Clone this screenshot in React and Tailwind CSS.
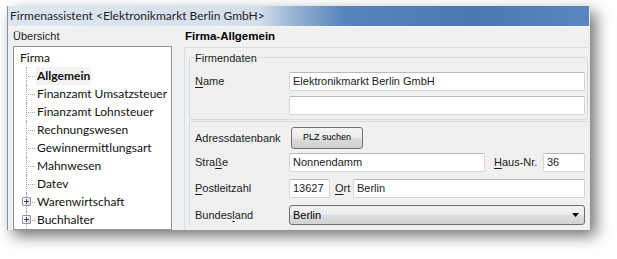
import React from 'react'

const label = "font-['Liberation_Sans',Arial,sans-serif] text-[11px] text-[#1b1b1b] whitespace-nowrap"
const field =
  "flex items-center h-[19px] pl-[3px] bg-white border border-[#d3d5da] border-t-[#b7bac1] rounded-[2px] font-['Liberation_Sans',Arial,sans-serif] text-[11px] text-[#1b1b1b] whitespace-nowrap"

const treeItems = [
  { text: 'Allgemein', bold: true },
  { text: 'Finanzamt Umsatzsteuer' },
  { text: 'Finanzamt Lohnsteuer' },
  { text: 'Rechnungswesen' },
  { text: 'Gewinnermittlungsart' },
  { text: 'Mahnwesen' },
  { text: 'Datev' },
  { text: 'Warenwirtschaft', plus: true },
  { text: 'Buchhalter', plus: true },
]

const PlusBox = () => (
  <div className="absolute left-[-4px] top-[4px] w-[9px] h-[9px] border border-[#969696] rounded-[1px] bg-gradient-to-br from-white to-[#dcdcdc] flex items-center justify-center">
    <svg width="5" height="5" viewBox="0 0 5 5">
      <path d="M0 2.5H5M2.5 0V5" stroke="#2b4a7a" strokeWidth="1" />
    </svg>
  </div>
)

const TreeRow = ({ item }) => (
  <div className="flex h-[18px] ml-[12px]">
    <div className="relative w-[9px] h-full shrink-0">
      <div className="absolute left-0 top-0 bottom-0 border-l border-dotted border-[#a3a3a3]" />
      <div className="absolute left-0 right-0 top-[9px] border-t border-dotted border-[#a3a3a3]" />
      {item.plus && <PlusBox />}
    </div>
    <div
      className={`ml-[1px] px-[1px] flex items-center h-full whitespace-nowrap ${
        item.bold ? 'font-bold bg-[#f3f3f3]' : ''
      }`}
    >
      {item.text}
    </div>
  </div>
)

const U = ({ children }) => <span className="underline underline-offset-[2px]">{children}</span>

export default function App() {
  return (
    <div className="w-[617px] h-[259px] bg-white pl-[7px] pt-[6px] overflow-hidden">
      <div className="w-[583px] h-[224px] flex flex-col overflow-hidden border-l border-[#8595a6] border-r border-r-[#ececec] shadow-[6px_6px_14px_rgba(0,0,0,0.55)]">
        {/* Title bar */}
        <div className="h-[21px] shrink-0 flex items-center pl-[2px] bg-[linear-gradient(to_right,#dde6f0_0%,#d5dfeb_43%,#90aed0_50%,#5684bb_58%,#4a78b0_80%,#5886bd_100%)] border-b border-[#f4f7fa]">
          <span className="font-['Lato',sans-serif] text-[12px] text-[#1e1e1e] whitespace-nowrap">
            Firmenassistent &lt;Elektronikmarkt Berlin GmbH&gt;
          </span>
        </div>

        <div className="flex flex-1 min-h-0 bg-[#f0f0f0]">
          {/* Left column */}
          <div className="w-[170px] shrink-0 flex flex-col pl-[5px]">
            <div className={`h-[19px] shrink-0 flex items-center ${label}`}>Übersicht</div>
            <div className="w-[159px] flex-1 bg-white border border-[#8e9299] pt-[2px] font-['Lato',sans-serif] text-[12px] text-[#111] overflow-hidden">
              <div className="h-[18px] flex items-center pl-[6px]">Firma</div>
              {treeItems.map((item) => (
                <TreeRow key={item.text} item={item} />
              ))}
              <div className="ml-[12px] h-[20px] border-l border-dotted border-[#a3a3a3]" />
            </div>
          </div>

          {/* Right column */}
          <div className="flex-1 flex flex-col min-w-0">
            <div className="h-[20px] shrink-0 flex items-center pl-[7px] font-['Liberation_Sans',Arial,sans-serif] text-[11.5px] font-bold text-black">
              Firma-Allgemein
            </div>
            <div className="ml-[6px] flex-1 border-t border-l border-[#d6dde4] pl-[4px] pt-[9px] pr-[1px]">
              {/* Firmendaten */}
              <div className="relative border border-[#d3dbe2] rounded-[3px] pl-[5px] pt-[14px] pb-[4px]">
                <span className={`absolute left-[4px] top-[-8px] px-[1px] bg-[#f0f0f0] ${label}`}>Firmendaten</span>
                <div className="flex items-center">
                  <div className={`w-[94px] ${label}`}>
                    <U>N</U>ame
                  </div>
                  <div className={`${field} w-[296px] bg-[#fffde4]`}>Elektronikmarkt Berlin GmbH</div>
                </div>
                <div className="flex items-center mt-[5px]">
                  <div className="w-[94px]" />
                  <div className={`${field} w-[296px]`} />
                </div>
              </div>

              {/* Adresse */}
              <div className="mt-[1px] border-t border-l border-[#d3dbe2] pl-[5px] pt-[5px]">
                <div className="flex items-center">
                  <div className={`w-[96px] ${label}`}>Adressdatenbank</div>
                  <div className="w-[72px] h-[22px] flex items-center justify-center rounded-[3px] border border-[#707070] bg-[linear-gradient(to_bottom,#f3f3f3_0%,#ebebeb_48%,#dddddd_52%,#cfcfcf_100%)] font-['Liberation_Sans',Arial,sans-serif] text-[9px] text-black">
                    PLZ suchen
                  </div>
                </div>
                <div className="flex items-center mt-[4px]">
                  <div className={`w-[94px] ${label}`}>
                    Stra<U>ß</U>e
                  </div>
                  <div className={`${field} w-[196px]`}>Nonnendamm</div>
                  <div className={`w-[58px] pl-[9px] ${label}`}>
                    <U>H</U>aus-Nr.
                  </div>
                  <div className={`${field} w-[42px]`}>36</div>
                </div>
                <div className="flex items-center mt-[7px]">
                  <div className={`w-[94px] ${label}`}>
                    <U>P</U>ostleitzahl
                  </div>
                  <div className={`${field} w-[41px]`}>13627</div>
                  <div className={`w-[23px] pl-[5px] ${label}`}>
                    <U>O</U>rt
                  </div>
                  <div className={`${field} w-[232px]`}>Berlin</div>
                </div>
                <div className="flex items-center mt-[7px]">
                  <div className={`w-[94px] ${label}`}>
                    Bundes<U>l</U>and
                  </div>
                  <div className="w-[296px] h-[20px] flex items-center justify-between pl-[3px] pr-[5px] rounded-[3px] border border-[#707070] bg-[linear-gradient(to_bottom,#f2f2f2_0%,#ebebeb_48%,#dddddd_52%,#d2d2d2_100%)] font-['Liberation_Sans',Arial,sans-serif] text-[11px] text-black">
                    <span>Berlin</span>
                    <svg width="7" height="4" viewBox="0 0 7 4">
                      <path d="M0 0H7L3.5 4Z" fill="#000" />
                    </svg>
                  </div>
                </div>
              </div>
            </div>
          </div>
        </div>
      </div>
    </div>
  )
}
